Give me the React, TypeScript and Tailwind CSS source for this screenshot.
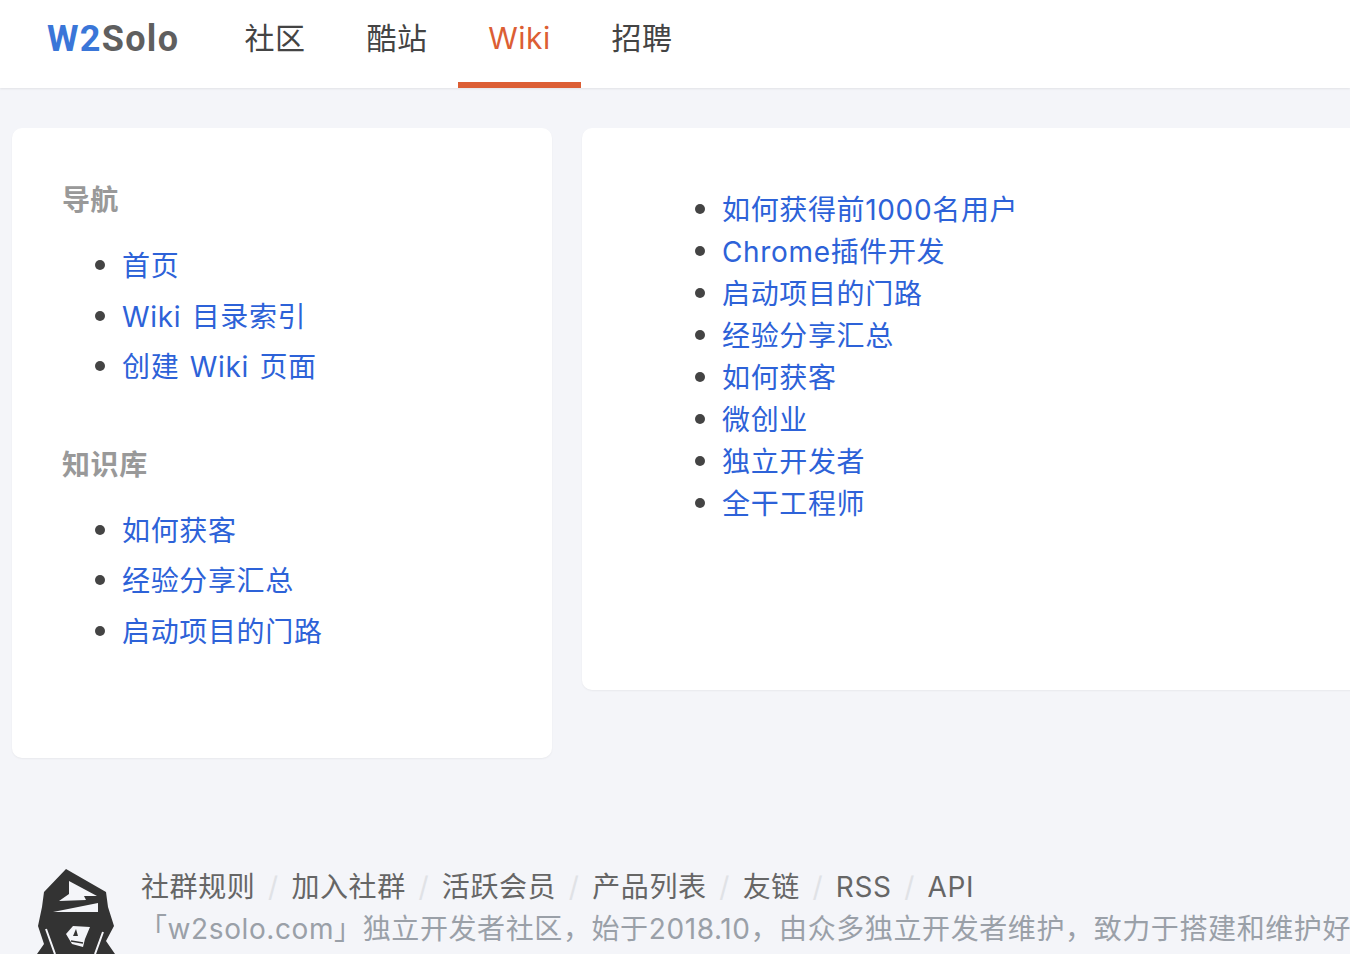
import React from 'react';

const nav = ['社区', '酷站', 'Wiki', '招聘'];
const guide = ['首页', 'Wiki 目录索引', '创建 Wiki 页面'];
const kb = ['如何获客', '经验分享汇总', '启动项目的门路'];
const wiki = ['如何获得前1000名用户', 'Chrome插件开发', '启动项目的门路', '经验分享汇总', '如何获客', '微创业', '独立开发者', '全干工程师'];
const footer = ['社群规则', '加入社群', '活跃会员', '产品列表', '友链', 'RSS', 'API'];

const font = { fontFamily: '"Inter", "Noto Sans CJK SC", sans-serif' };

const Logo = () => (
  <svg viewBox="0 0 92 90" className="w-[92px] h-[90px] shrink-0">
    <path d="M36 5 L76 28 L78 43 L84 62 L76 77 L85 90 L7 90 L14 80 L8 62 L12 43 L14 28 Z" fill="#333" />
    <path d="M39 17 L67 32 L54 32 L56 36 L29 37 L39 30 Z" fill="#f4f5f9" />
    <path d="M23 48 L68 39 L68 48 Z" fill="#f4f5f9" />
    <path d="M36 70 L43 62 L60 63 L55 75 L53 83 L42 80 Z" fill="#f4f5f9" />
    <path d="M46 65 L48 72 L43 72 Z" fill="#333" />
    <path d="M41 77 L53 79" stroke="#333" strokeWidth="1.5" />
    <path d="M16 65 L25 90 M73 68 L65 90" stroke="#f4f5f9" strokeWidth="2" />
  </svg>
);

const Links = ({ items, pitch }: { items: string[]; pitch: string }) => (
  <ul className={`list-none pl-[60px] text-[28px] tracking-[0.65px] [word-spacing:2px] ${pitch}`}>
    {items.map((t) => (
      <li key={t} className="flex items-center">
        <span className="w-[10px] h-[10px] rounded-full bg-[#444] -ml-[27px] mr-[17px] -mt-[2px] shrink-0" />
        <a className="text-[#2d62d8] whitespace-pre-wrap">{t}</a>
      </li>
    ))}
  </ul>
);

const App: React.FC = () => {
  return (
    <div className="h-screen w-full overflow-hidden bg-[#f4f5f9]" style={font}>
      <header className="h-[88px] bg-white flex shadow-[0_1px_2px_rgba(0,0,0,0.08)] pl-[47px]">
        <div className="w-[168px] font-bold text-[36px] leading-[78px] tracking-[1.3px]" style={{ fontFamily: '"Roboto", sans-serif' }}>
          <span className="text-[#3a76d8]">W2</span>
          <span className="text-[#5f5f5f]">Solo</span>
        </div>
        <nav className="flex -ml-[1px] text-[30px] tracking-[0.5px] text-[#444]">
          {nav.map((n) => (
            <div
              key={n}
              className={
                n === 'Wiki'
                  ? 'w-[123px] h-[88px] text-center leading-[77px] text-[#dc5e34] border-b-[6px] border-[#dc5e34]'
                  : 'w-[122px] h-[88px] text-center leading-[77px]'
              }
            >
              {n}
            </div>
          ))}
        </nav>
      </header>

      <main className="flex items-start gap-[30px] pl-[12px] pt-[40px]">
        <aside className="w-[540px] h-[630px] shrink-0 bg-white rounded-[10px] shadow-[0_1px_2px_rgba(0,0,0,0.05)] pl-[50px] pt-[54px]">
          <h3 className="text-[28px] font-bold text-[#999] leading-[36px] tracking-[0.3px] mb-[23px]">导航</h3>
          <Links items={guide} pitch="leading-[50.5px]" />
          <h3 className="text-[28px] font-bold text-[#999] leading-[36px] tracking-[0.6px] mt-[54px] mb-[23px]">知识库</h3>
          <Links items={kb} pitch="leading-[50.5px]" />
        </aside>
        <section className="w-[900px] h-[562px] shrink-0 bg-white rounded-[10px] shadow-[0_1px_2px_rgba(0,0,0,0.05)] pl-[80px] pt-[61px]">
          <Links items={wiki} pitch="leading-[42px]" />
        </section>
      </main>

      <footer className="flex gap-[19px] pl-[30px] mt-[106px]">
        <Logo />
        <div className="text-[28px] whitespace-nowrap tracking-[0.6px] pt-[3px]">
          <div className="flex text-[#666] leading-[40px]">
            {footer.map((f, i) => (
              <span key={f} className="flex">
                {i > 0 && <span className="text-[#e0e2e6] w-[36px] text-center">/</span>}
                {f}
              </span>
            ))}
          </div>
          <div className="text-[#9aa0a8] leading-[44px] -ml-[2px]">「w2solo.com」独立开发者社区，始于2018.10，由众多独立开发者维护，致力于搭建和维护好</div>
        </div>
      </footer>
    </div>
  );
};

export default App;
